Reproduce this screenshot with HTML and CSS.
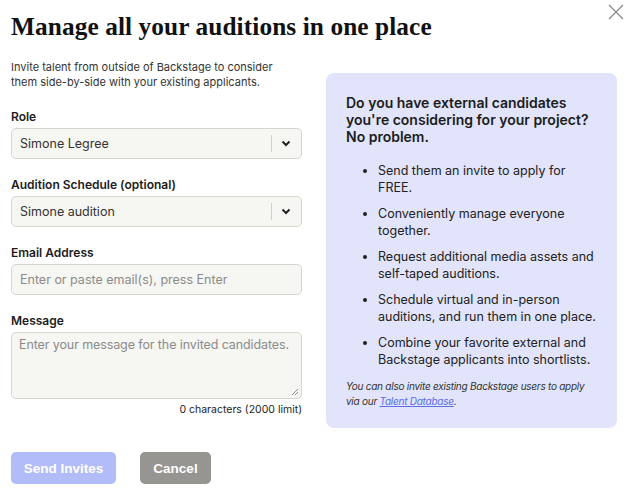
FILE: index.html
```html
<!DOCTYPE html>
<html>
<head>
<meta charset="utf-8">
<link rel="stylesheet" href="styles.css">
</head>
<body>
<div class="modal">
  <button class="close" aria-label="Close">
    <svg width="16" height="16" viewBox="0 0 16 16"><path d="M1 1 L15 15 M15 1 L1 15" stroke="#8a8a8a" stroke-width="1.3" fill="none"/></svg>
  </button>
  <h1 class="title">Manage all your auditions in one place</h1>
  <div class="content">
    <div class="form">
      <p class="intro">Invite talent from outside of Backstage to consider them side-by-side with your existing applicants.</p>
      <div class="field">
        <label class="label">Role</label>
        <div class="select">
          <span class="value">Simone Legree</span>
          <span class="sep"></span>
          <svg class="chev" width="10" height="7" viewBox="0 0 10 7"><path d="M1.5 1.5 L5 5 L8.5 1.5" stroke="#222" stroke-width="2" fill="none"/></svg>
        </div>
      </div>
      <div class="field">
        <label class="label">Audition Schedule (optional)</label>
        <div class="select">
          <span class="value">Simone audition</span>
          <span class="sep"></span>
          <svg class="chev" width="10" height="7" viewBox="0 0 10 7"><path d="M1.5 1.5 L5 5 L8.5 1.5" stroke="#222" stroke-width="2" fill="none"/></svg>
        </div>
      </div>
      <div class="field">
        <label class="label">Email Address</label>
        <div class="input"><span class="placeholder">Enter or paste email(s), press Enter</span></div>
      </div>
      <div class="field">
        <label class="label">Message</label>
        <div class="textarea">
          <span class="placeholder nowrap">Enter your message for the invited candidates.</span>
          <svg class="grip" width="8" height="8" viewBox="0 0 8 8"><path d="M7 1 L1 7 M7 4 L4 7" stroke="#777" stroke-width="0.8"/></svg>
        </div>
        <div class="count">0 characters (2000 limit)</div>
      </div>
    </div>
    <aside class="panel">
      <h2 class="panel-title">Do you have external candidates you're considering for your project? No problem.</h2>
      <ul class="list">
        <li>Send them an invite to apply for FREE.</li>
        <li>Conveniently manage everyone together.</li>
        <li>Request additional media assets and self-taped auditions.</li>
        <li>Schedule virtual and in-person auditions, and run them in one place.</li>
        <li>Combine your favorite external and Backstage applicants into shortlists.</li>
      </ul>
      <p class="note">You can also invite existing Backstage users to apply via our <a class="link" href="#">Talent Database</a>.</p>
    </aside>
  </div>
  <div class="actions">
    <button class="btn btn-primary">Send Invites</button>
    <button class="btn btn-secondary">Cancel</button>
  </div>
</div>
</body>
</html>
```
FILE: styles.css
```css
* { box-sizing: border-box; }
html, body { margin: 0; padding: 0; background: #fff; }
body { font-family: Inter, "Noto Sans", sans-serif; color: #1c1c1c; }
.modal { position: relative; width: 629px; height: 492px; padding: 10px 12px 0 11px; }
.close { position: absolute; top: 4px; right: 5px; border: 0; background: none; padding: 0; width: 16px; height: 16px; }
.close svg { display: block; }
.title { margin: 0; font-family: "Liberation Serif", serif; font-weight: 700; font-size: 25.3px; line-height: 32px; color: #111; letter-spacing: 0.1px; }
.content { display: flex; align-items: flex-start; gap: 24px; margin-top: 18px; }
.form { width: 291px; flex: none; }
.intro { margin: 0 0 19px; max-width: 275px; font-size: 11px; line-height: 15px; color: #333; }
.field { margin-bottom: 18px; }
.field:last-child { margin-bottom: 0; }
.label { display: block; font-size: 12px; font-weight: 600; line-height: 16px; margin-bottom: 3px; color: #1c1c1c; }
.select, .input, .textarea { background: #f6f6f2; border: 1px solid #d6d6d0; border-radius: 5px; font-size: 12.5px; }
.select { height: 31px; display: flex; align-items: center; padding: 0 10px 0 8px; }
.select .value { flex: 1; color: #333; }
.sep { width: 1px; height: 17px; background: #cfcfcf; margin-right: 9px; }
.chev { display: block; }
.input { height: 31px; display: flex; align-items: center; padding: 0 8px; }
.placeholder { color: #8b8b8b; }
.nowrap { white-space: nowrap; letter-spacing: -0.1px; }
.textarea { position: relative; height: 67px; padding: 4px 7px; line-height: 16px; }
.grip { position: absolute; right: 2px; bottom: 2px; }
.count { text-align: right; font-size: 10.5px; margin-top: 4px; color: #222; }
.panel { width: 291px; flex: none; margin-top: 13px; height: 355px; background: #e1e4fa; border-radius: 8px; padding: 21px 20px 0 20px; }
.panel-title { margin: 0 0 17px; font-size: 14px; font-weight: 600; line-height: 17px; color: #1c1c1c; }
.list { margin: 0; padding: 0 0 0 32px; font-size: 12.5px; line-height: 17px; color: #222; }
.list li { margin-bottom: 9px; }
.note { margin: 11px 0 0; font-size: 10px; font-style: italic; line-height: 15px; color: #333; letter-spacing: -0.25px; }
.link { display: inline-block; color: #5b6cf0; text-decoration: underline; }
.actions { display: flex; gap: 24px; margin-top: 24px; }
.btn { height: 32px; border: 0; border-radius: 5px; font-family: "Liberation Sans", Arial, sans-serif; font-weight: 700; font-size: 13.5px; color: #fff; padding: 0 11px; }
.btn-primary { background: #b2bcf9; width: 105px; }
.btn-secondary { background: #979591; width: 71px; }
```
